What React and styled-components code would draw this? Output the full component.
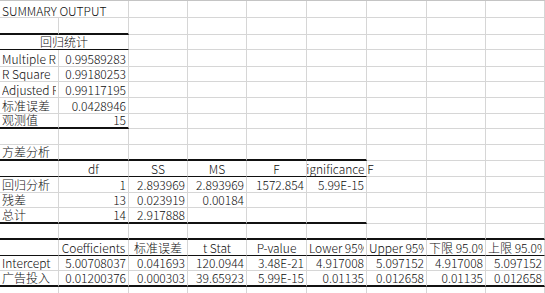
import React from 'react';
import styled, { createGlobalStyle } from 'styled-components';

const Global = createGlobalStyle`
  html, body { margin: 0; padding: 0; background: #fff; }
  body { font-family: "Noto Sans CJK SC", "Liberation Sans", sans-serif; }
`;

const COLS = [59, 70, 59, 59, 60, 60, 60, 59, 59];

const Sheet = styled.div`
  display: grid;
  grid-template-columns: ${COLS.map((c) => c + 'px').join(' ')};
  grid-template-rows: ${(p) => p.$rows.map((h) => h + 'px').join(' ')};
  border-top: 1px solid #c4c4c4;
  width: 545px;
  height: 292px;
  overflow: hidden;
  font-size: 12px;
  font-weight: 300;
  color: #0d0d0d;
`;

const Cell = styled.div`
  grid-column: span ${(p) => p.$span || 1};
  box-sizing: border-box;
  display: flex;
  align-items: flex-end;
  justify-content: ${(p) => (p.$ov ? 'center' : 'stretch')};
  padding: 0 2px;
  border-right: 1px solid #d6d6d6;
  border-bottom: ${(p) =>
    p.$bb === 'thick'
      ? '2px solid #111'
      : p.$bb === 'thin'
      ? '1px solid #111'
      : '1px solid #d6d6d6'};
  overflow: ${(p) => (p.$ov ? 'visible' : 'hidden')};
  clip-path: ${(p) => (p.$ov ? 'inset(0 -60px 0 0)' : 'none')};
  white-space: nowrap;
  min-width: 0;
`;

const Text = styled.span`
  flex: ${(p) => (p.$ov ? 'none' : '1 1 auto')};
  min-width: 0;
  overflow: ${(p) => (p.$ov ? 'visible' : 'hidden')};
  text-align: ${(p) => (p.$a === 'r' ? 'right' : p.$a === 'c' ? 'center' : 'left')};
  line-height: ${(p) => (p.$low ? '12px' : '14px')};
`;

const L = (t) => ({ t, a: 'l' });
const R = (t) => ({ t, a: 'r' });
const C = (t) => ({ t, a: 'c' });

const ROWS = [
  { h: 17, cells: [{ ...L('SUMMARY OUTPUT'), span: 2, low: true }] },
  { h: 17, cells: [], bb: ['thick', 0, 1] },
  { h: 15, cells: [{ ...C('回归统计'), span: 2 }], bb: ['thin', 0, 1] },
  { h: 17, cells: [L('Multiple R'), R('0.99589283')] },
  { h: 15, cells: [L('R Square'), R('0.99180253')] },
  { h: 16, cells: [L('Adjusted R Square'), R('0.99117195')] },
  { h: 16, cells: [L('标准误差'), R('0.0428946')] },
  { h: 15, cells: [L('观测值'), R('15')], bb: ['thick', 0, 1] },
  { h: 16, cells: [] },
  { h: 16, cells: [L('方差分析')], bb: ['thick', 0, 5] },
  {
    h: 16,
    cells: [null, C('df'), C('SS'), C('MS'), C('F'), { t: 'Significance F', a: 'c', ov: true }],
    bb: ['thin', 0, 5],
  },
  {
    h: 16,
    cells: [L('回归分析'), R('1'), R('2.893969'), R('2.893969'), R('1572.854'), R('5.99E-15')],
  },
  { h: 15, cells: [L('残差'), R('13'), R('0.023919'), R('0.00184')] },
  { h: 16, cells: [L('总计'), R('14'), R('2.917888')], bb: ['thick', 0, 5] },
  { h: 16, cells: [], bb: ['thick', 0, 8] },
  {
    h: 16,
    cells: [
      null,
      C('Coefficients'),
      C('标准误差'),
      C('t Stat'),
      C('P-value'),
      C('Lower 95%'),
      C('Upper 95%'),
      C('下限 95.0%'),
      C('上限 95.0%'),
    ],
    bb: ['thin', 0, 8],
  },
  {
    h: 15,
    cells: [
      L('Intercept'),
      R('5.00708037'),
      R('0.041693'),
      R('120.0944'),
      R('3.48E-21'),
      R('4.917008'),
      R('5.097152'),
      R('4.917008'),
      R('5.097152'),
    ],
  },
  {
    h: 16,
    cells: [
      L('广告投入'),
      R('0.01200376'),
      R('0.000303'),
      R('39.65923'),
      R('5.99E-15'),
      R('0.01135'),
      R('0.012658'),
      R('0.01135'),
      R('0.012658'),
    ],
    bb: ['thick', 0, 8],
  },
  { h: 16, cells: [] },
];

function Row({ row, ri }) {
  const out = [];
  let col = 0;
  let i = 0;
  while (col < COLS.length) {
    const cell = row.cells[i] || null;
    const span = (cell && cell.span) || 1;
    let bb;
    if (row.bb && col >= row.bb[1] && col <= row.bb[2]) bb = row.bb[0];
    out.push(
      <Cell key={`${ri}-${col}`} $span={span} $bb={bb} $ov={cell && cell.ov}>
        {cell ? (
          <Text $a={cell.a} $ov={cell.ov} $low={cell.low}>
            {cell.t}
          </Text>
        ) : null}
      </Cell>
    );
    col += span;
    i += 1;
  }
  return out;
}

export default function App() {
  return (
    <>
      <Global />
      <Sheet $rows={ROWS.map((r) => r.h)}>
        {ROWS.map((row, ri) => (
          <Row key={ri} row={row} ri={ri} />
        ))}
      </Sheet>
    </>
  );
}
